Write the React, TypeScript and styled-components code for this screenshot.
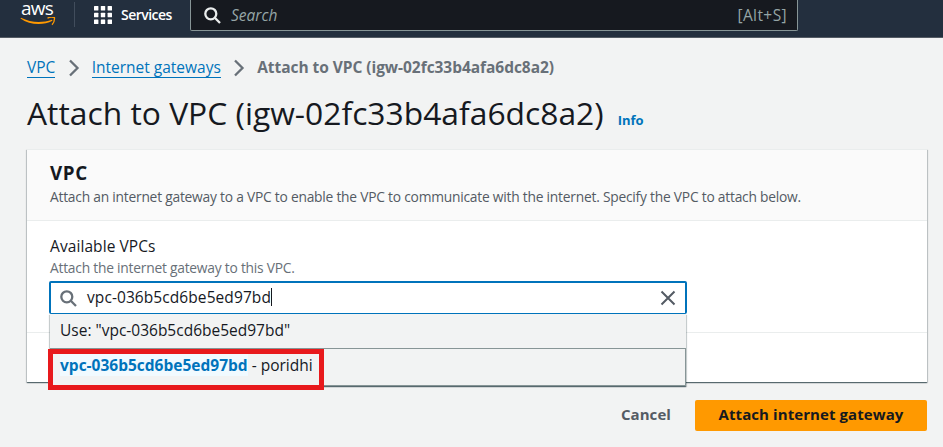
import React from 'react';
import styled, { createGlobalStyle } from 'styled-components';

const GlobalStyle = createGlobalStyle`
  * { box-sizing: border-box; }
  html, body { margin: 0; height: 100%; overflow: hidden; }
  body {
    background: #f2f3f3;
    color: #16191f;
    font-family: "Open Sans", "Noto Sans", sans-serif;
    font-size: 15.5px;
  }
`;

const TopBar = styled.header`
  display: flex;
  align-items: flex-start;
  height: 38px;
  background: #232f3e;
  border-bottom: 1px solid #545b64;
  color: #fff;
`;

const Logo = styled.div`
  width: 36px;
  height: 27px;
  margin-left: 20px;
`;

const Wordmark = styled.div`
  height: 17px;
  padding-left: 1px;
  font-size: 19px;
  font-weight: 500;
  line-height: 17px;
  letter-spacing: -0.75px;
`;

const Smile = styled.svg`
  display: block;
  width: 36px;
  height: 10px;
`;

const Divider = styled.div`
  width: 1px;
  height: 25px;
  margin: 2px 0 0 18px;
  background: #414d5c;
`;

const Services = styled.div`
  display: flex;
  align-items: center;
  gap: 9px;
  width: 96px;
  height: 29px;
  margin-left: 19px;
  font-size: 14px;
  font-weight: 600;
  letter-spacing: -0.53px;
`;

const SearchBar = styled.div`
  display: flex;
  align-items: center;
  width: 608px;
  height: 31px;
  padding: 0 10px 0 13px;
  background: #16191f;
  border: 1px solid #879596;
  border-top: 0;
  border-radius: 0 0 2px 2px;
  color: #95a5a6;
`;

const Placeholder = styled.span`
  flex: 1;
  margin-left: 10px;
  padding-bottom: 1px;
  font-style: italic;
`;

const Shortcut = styled.span`
  font-size: 15.5px;
  letter-spacing: 0.4px;
`;

const Page = styled.main`
  padding: 18px 16px 0 27px;
`;

const Breadcrumbs = styled.nav`
  display: flex;
  align-items: flex-start;
  height: 24px;
  line-height: 23px;
`;

const Crumb = styled.a`
  height: 22px;
  border-bottom: 1px solid #0073bb;
  color: #0073bb;
  line-height: 23px;
  white-space: nowrap;
`;

const CurrentCrumb = styled.span`
  color: #687078;
  font-weight: 700;
  letter-spacing: -0.045px;
  white-space: nowrap;
`;

const Chevron = styled.svg`
  width: 12px;
  height: 18px;
  margin: 3px 12px 0 12.3px;
  fill: none;
  stroke: #687078;
  stroke-width: 2.3;
`;

const TitleRow = styled.div`
  display: flex;
  align-items: baseline;
  height: 44px;
  margin-top: 12px;
`;

const Title = styled.h1`
  margin: 0;
  font-size: 31.8px;
  font-weight: 400;
  line-height: 41px;
  white-space: nowrap;
`;

const InfoLink = styled.a`
  margin-left: 14px;
  color: #0073bb;
  font-size: 13px;
  font-weight: 700;
`;

const Panel = styled.section`
  height: 233px;
  margin-top: 13px;
  background: #fff;
  box-shadow: 0 1px 1px 0 rgba(0, 28, 36, 0.5), 1px 1px 1px 0 rgba(0, 28, 36, 0.15),
    -1px 1px 1px 0 rgba(0, 28, 36, 0.15);
`;

const PanelHeader = styled.div`
  height: 72px;
  padding: 11px 23px 0;
  background: #fafafa;
  border-top: 1px solid #eaeded;
  border-bottom: 1px solid #eaeded;
`;

const PanelTitle = styled.h2`
  margin: 0;
  font-size: 18.8px;
  font-weight: 700;
  line-height: 25px;
  letter-spacing: 0.6px;
`;

const Description = styled.p<{ $muted?: boolean }>`
  margin: 0;
  color: ${(p) => (p.$muted ? '#687078' : '#545b64')};
  font-size: 13.8px;
  line-height: 22px;
  letter-spacing: -0.23px;
  white-space: nowrap;
`;

const PanelBody = styled.div`
  height: 112px;
  padding: 14px 23px 0 22px;
  border-bottom: 1px solid #eaeded;
`;

const FieldText = styled.div`
  padding-left: 1px;
`;

const Label = styled.label`
  display: block;
  line-height: 22px;
  letter-spacing: 0.08px;
`;

const Combobox = styled.div`
  position: relative;
  width: 638px;
  margin-top: 2px;
`;

const Field = styled.div`
  display: flex;
  align-items: center;
  height: 33px;
  padding: 0 9px 0 9px;
  background: #fff;
  border: solid #0073bb;
  border-width: 2px 2px 1px;
  border-radius: 2px;
`;

const Value = styled.span`
  flex: 1;
  display: flex;
  align-items: center;
  margin-left: 10px;
  padding-bottom: 2px;
  letter-spacing: 0.08px;
`;

const Caret = styled.i`
  width: 1px;
  height: 18px;
  background: #16191f;
`;

const Menu = styled.div`
  position: absolute;
  top: 33px;
  left: 1px;
  z-index: 1;
  width: 636px;
  background: #f2f3f3;
  box-shadow: 0 1px 1px 0 rgba(0, 28, 36, 0.5), 1px 1px 1px 0 rgba(0, 28, 36, 0.15),
    -1px 1px 1px 0 rgba(0, 28, 36, 0.15);
`;

const Option = styled.div<{ $active?: boolean }>`
  height: ${(p) => (p.$active ? 38 : 34)}px;
  padding-left: ${(p) => (p.$active ? 9 : 10)}px;
  line-height: 33px;
  border: ${(p) => (p.$active ? '1px solid #879596' : '0')};
  white-space: pre;
`;

const Match = styled.mark`
  background: #f1faff;
  color: #0073bb;
  font-weight: 700;
`;

const Highlight = styled.div`
  position: absolute;
  top: 35px;
  left: -2px;
  width: 276px;
  height: 41px;
  border: 5px solid #e8191c;
`;

const Actions = styled.footer`
  display: flex;
  justify-content: flex-end;
  align-items: center;
  gap: 24px;
  margin-top: 18px;
`;

const Button = styled.button<{ $primary?: boolean }>`
  height: 31px;
  padding: 0 0 3px;
  width: ${(p) => (p.$primary ? '232px' : 'auto')};
  border: 0;
  border-radius: 2px;
  background: ${(p) => (p.$primary ? '#ff9900' : 'transparent')};
  color: ${(p) => (p.$primary ? '#16191f' : '#545b64')};
  font: 700 15px "Open Sans", "Noto Sans", sans-serif;
  letter-spacing: 0.08px;
`;

const SearchIcon = ({ color }: { color: string }) => (
  <svg width="17" height="17" viewBox="0 0 17 17" fill="none" stroke={color} strokeWidth="2.3">
    <circle cx="6.800" cy="6.800" r="5.500" />
    <path d="M10.800 10.800l5.200 5.200" />
  </svg>
);

const GridIcon = () => (
  <svg width="18" height="18" viewBox="0 0 18 18" fill="#fff">
    {[0, 6.8, 13.6].map((y) =>
      [0, 6.8, 13.6].map((x) => <rect key={`${x}-${y}`} x={x} y={y} width="4.4" height="4.4" rx="0.5" />),
    )}
  </svg>
);

const Separator = () => (
  <Chevron viewBox="0 0 12 18">
    <path d="M2 1.5l7.500 7.500L2 16.500" />
  </Chevron>
);

export default function App() {
  return (
    <>
      <GlobalStyle />
      <TopBar>
        <Logo>
          <Wordmark>aws</Wordmark>
          <Smile viewBox="0 0 36 10">
            <path d="M.5 1.5C9.5 8 23 8.8 32.5 3.8l-.6-1C22 6.2 10.500 5.700 1 .8Z" fill="#f90" />
            <path d="M27.500 1.300c2.500-1.500 5-1.500 7-.6.2 2.500-.6 5-2.500 7" fill="none" stroke="#f90" strokeWidth="1.300" />
          </Smile>
        </Logo>
        <Divider />
        <Services>
          <GridIcon />
          Services
        </Services>
        <SearchBar>
          <SearchIcon color="#eaeded" />
          <Placeholder>Search</Placeholder>
          <Shortcut>[Alt+S]</Shortcut>
        </SearchBar>
      </TopBar>
      <Page>
        <Breadcrumbs>
          <Crumb>VPC</Crumb>
          <Separator />
          <Crumb>Internet gateways</Crumb>
          <Separator />
          <CurrentCrumb>Attach to VPC (igw-02fc33b4afa6dc8a2)</CurrentCrumb>
        </Breadcrumbs>
        <TitleRow>
          <Title>Attach to VPC (igw-02fc33b4afa6dc8a2)</Title>
          <InfoLink>Info</InfoLink>
        </TitleRow>
        <Panel>
          <PanelHeader>
            <PanelTitle>VPC</PanelTitle>
            <Description>
              Attach an internet gateway to a VPC to enable the VPC to communicate with the internet. Specify the VPC to
              attach below.
            </Description>
          </PanelHeader>
          <PanelBody>
            <FieldText>
              <Label>Available VPCs</Label>
              <Description $muted>Attach the internet gateway to this VPC.</Description>
            </FieldText>
            <Combobox>
              <Field>
                <SearchIcon color="#687078" />
                <Value>
                  vpc-036b5cd6be5ed97bd
                  <Caret />
                </Value>
                <svg width="16" height="16" viewBox="0 0 16 16" fill="none" stroke="#545b64" strokeWidth="2">
                  <path d="M1.500 1.500l13 13M14.500 1.500l-13 13" />
                </svg>
              </Field>
              <Menu>
                <Option>Use: "vpc-036b5cd6be5ed97bd"</Option>
                <Option $active>
                  <Match>vpc-036b5cd6be5ed97bd</Match> - poridhi
                </Option>
                <Highlight />
              </Menu>
            </Combobox>
          </PanelBody>
        </Panel>
        <Actions>
          <Button>Cancel</Button>
          <Button $primary>Attach internet gateway</Button>
        </Actions>
      </Page>
    </>
  );
}
